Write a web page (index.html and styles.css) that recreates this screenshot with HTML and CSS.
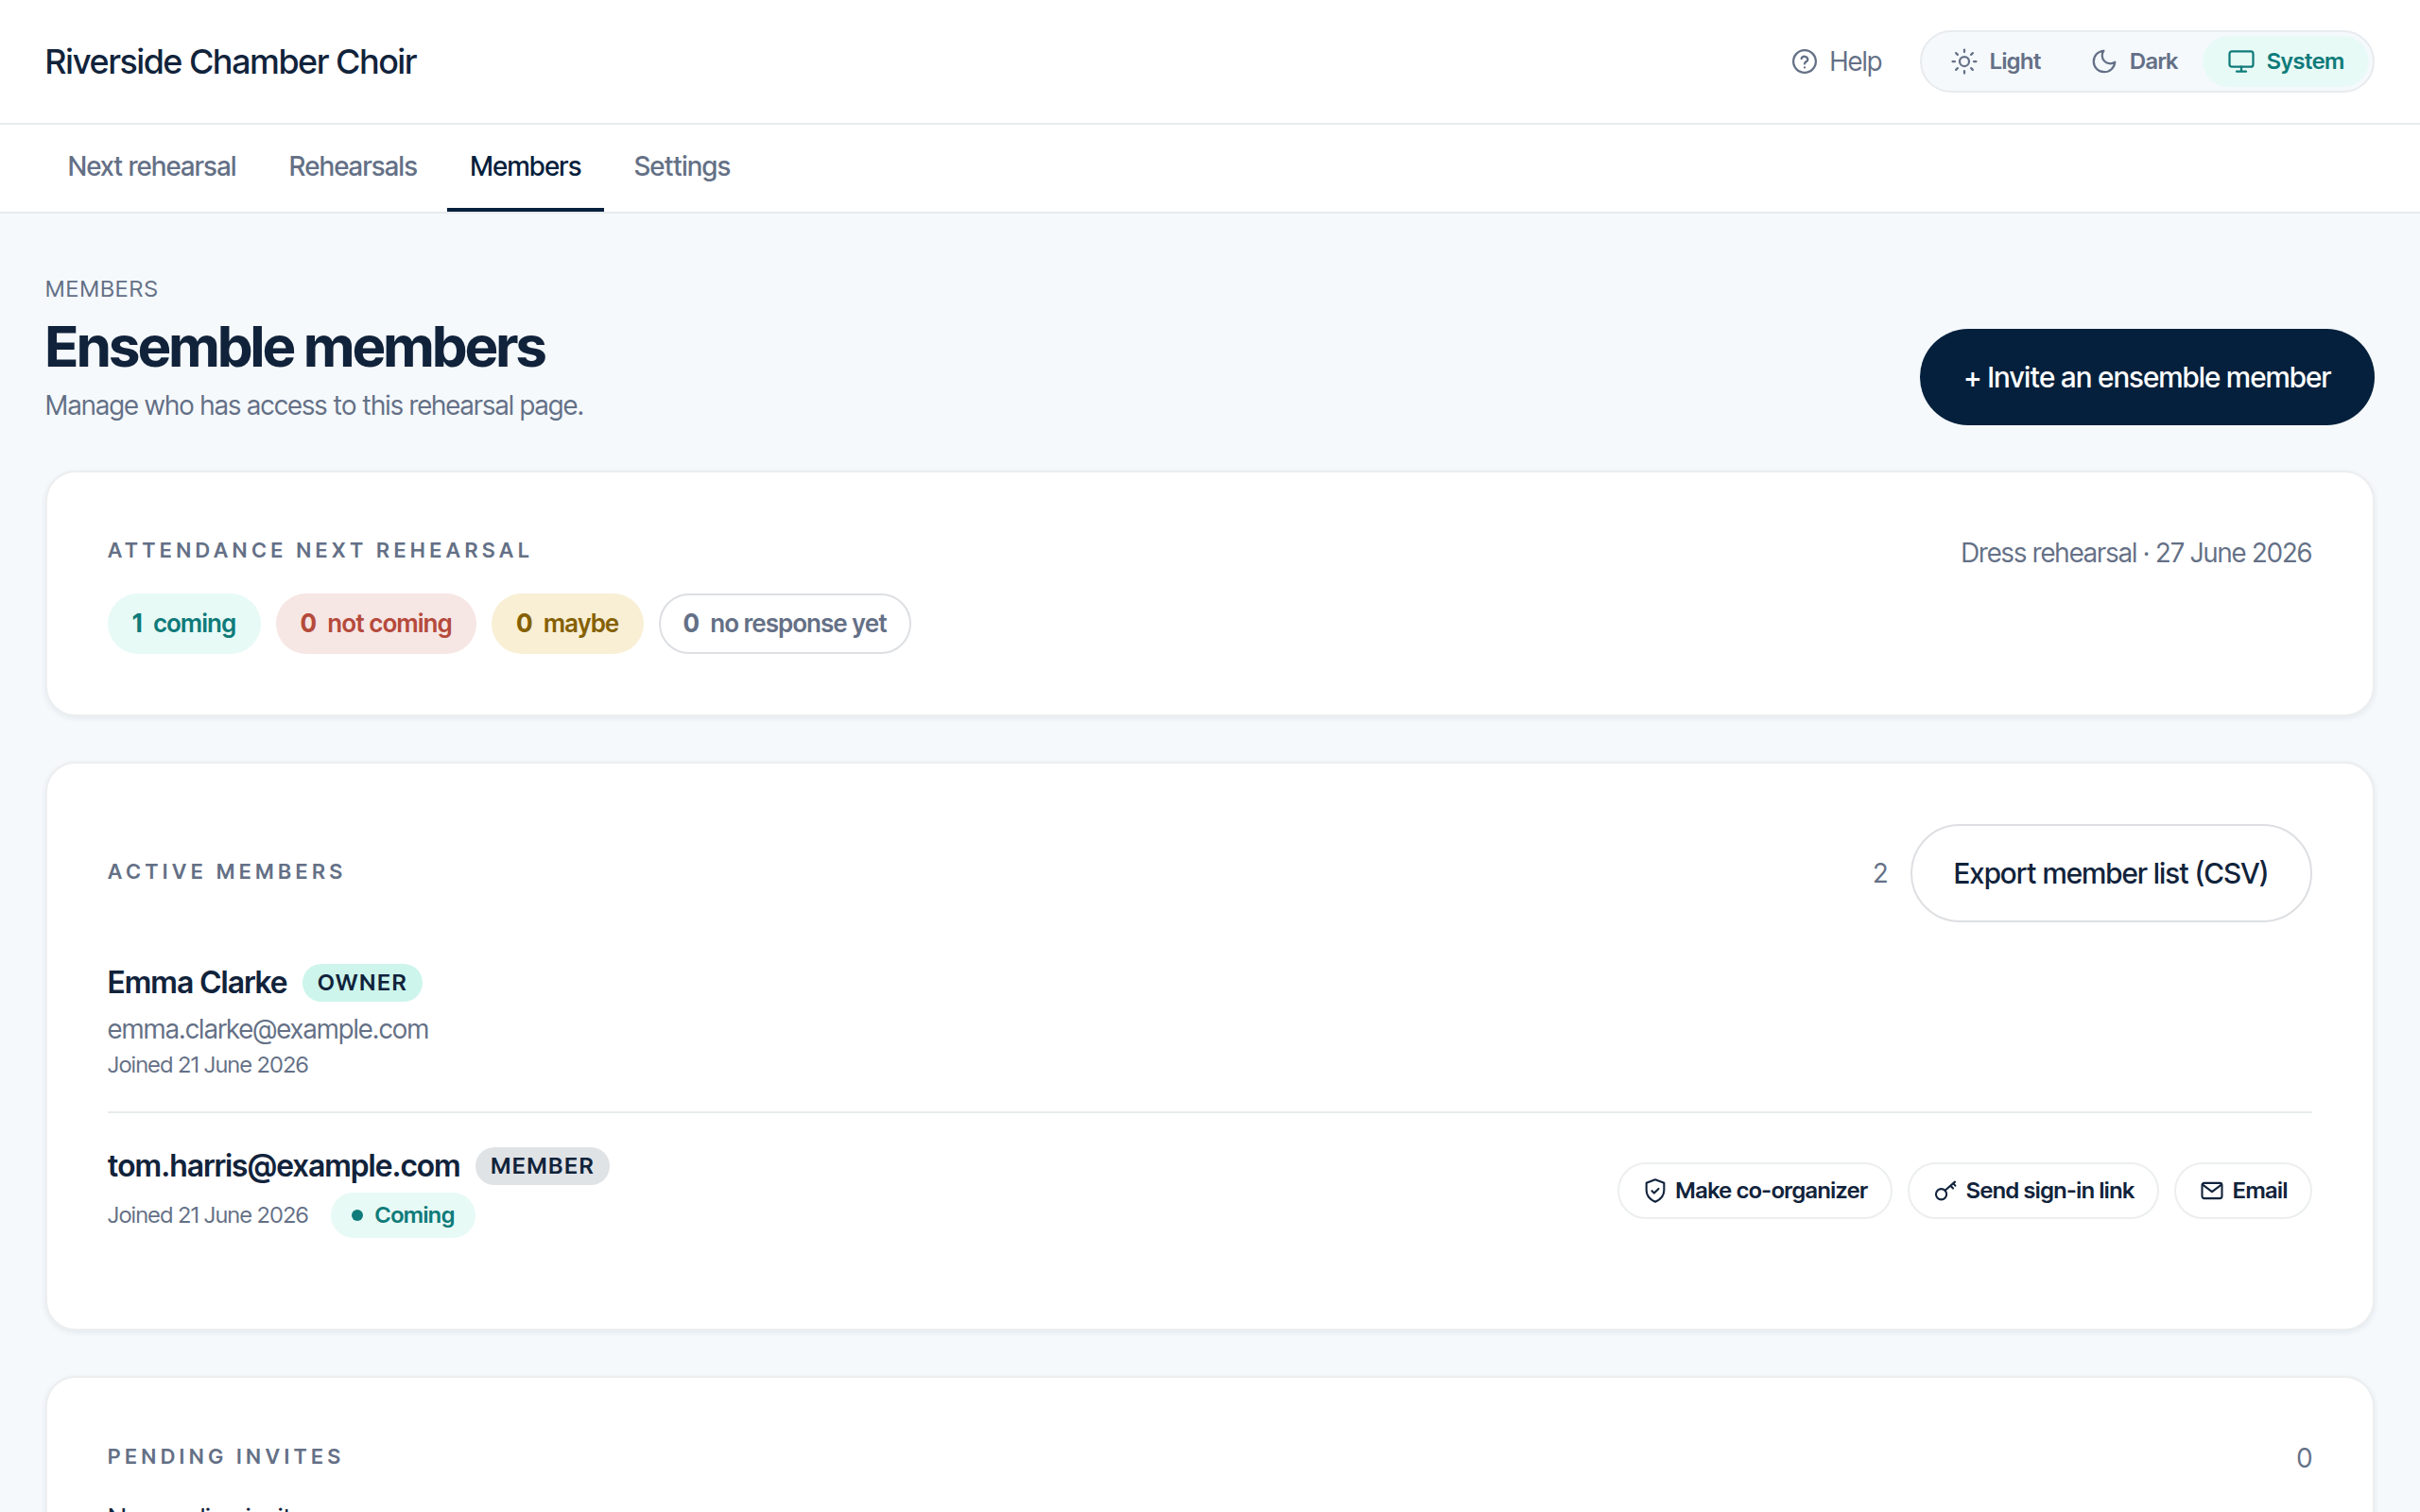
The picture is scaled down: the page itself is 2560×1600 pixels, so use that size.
FILE: index.html
```html
<!DOCTYPE html>
<html lang="en">
<head>
<meta charset="utf-8">
<title>Members · Riverside Chamber Choir</title>
<meta name="viewport" content="width=device-width, initial-scale=1">
<link rel="stylesheet" href="styles.css">
</head>
<body>
<header class="topbar">
  <a class="brand" href="#">Riverside Chamber Choir</a>
  <div class="topbar-tools">
    <a class="help" href="#">
      <svg class="icon icon-lg" viewBox="0 0 24 24" aria-hidden="true"><circle cx="12" cy="12" r="9.5"/><path d="M9.3 9.6a2.8 2.8 0 0 1 5.4.7c0 1.700-2.700 2.100-2.700 3.700M12 17v.1"/></svg>
      Help
    </a>
    <div class="theme" role="group" aria-label="Theme">
      <button class="theme-option" type="button"><svg class="icon icon-lg" viewBox="0 0 24 24" aria-hidden="true"><circle cx="12" cy="12" r="4"/><path d="M12 2v2M12 20v2M4.9 4.9l1.4 1.4M17.7 17.7l1.4 1.4M2 12h2M20 12h2M6.3 17.7l-1.4 1.4M19.1 4.9l-1.4 1.4"/></svg>Light</button>
      <button class="theme-option" type="button"><svg class="icon icon-lg" viewBox="0 0 24 24" aria-hidden="true"><path d="M11.500 3a6.800 6.800 0 0 0 9.500 9.500A9 9 0 1 1 11.500 3z"/></svg>Dark</button>
      <button class="theme-option is-active" type="button" aria-pressed="true"><svg class="icon icon-lg" viewBox="0 0 24 24" aria-hidden="true"><rect x="2" y="3.500" width="20" height="13" rx="2"/><path d="M8 20.500h8M12 16.500v4"/></svg>System</button>
    </div>
  </div>
</header>
<nav class="tabs" aria-label="Main">
  <a class="tab" href="#">Next rehearsal</a>
  <a class="tab" href="#">Rehearsals</a>
  <a class="tab is-active" href="#" aria-current="page">Members</a>
  <a class="tab" href="#">Settings</a>
</nav>
<main class="page">
  <div class="page-head">
    <div>
      <p class="eyebrow">Members</p>
      <h1 class="title">Ensemble members</h1>
      <p class="muted">Manage who has access to this rehearsal page.</p>
    </div>
    <button class="button button-primary" type="button">+ Invite an ensemble member</button>
  </div>

  <section class="card">
    <div class="card-head card-head-top">
      <h2 class="label">Attendance next rehearsal</h2>
      <p class="muted">Dress rehearsal · 27 June 2026</p>
    </div>
    <ul class="chips">
      <li class="chip chip-yes"><strong>1</strong>coming</li>
      <li class="chip chip-no"><strong>0</strong>not coming</li>
      <li class="chip chip-maybe"><strong>0</strong>maybe</li>
      <li class="chip chip-none"><strong>0</strong>no response yet</li>
    </ul>
  </section>

  <section class="card">
    <div class="card-head">
      <h2 class="label">Active members</h2>
      <div class="card-tools">
        <span class="muted">2</span>
        <button class="button button-outline" type="button">Export member list (CSV)</button>
      </div>
    </div>
    <ul class="members">
      <li class="member">
        <div>
          <div class="name-line"><span class="name">Emma Clarke</span><span class="badge badge-owner">Owner</span></div>
          <p class="muted email">emma.clarke@example.com</p>
          <p class="joined">Joined 21 June 2026</p>
        </div>
      </li>
      <li class="member">
        <div>
          <div class="name-line"><span class="name">tom.harris@example.com</span><span class="badge badge-member">Member</span></div>
          <div class="status-line"><span class="joined">Joined 21 June 2026</span><span class="status">Coming</span></div>
        </div>
        <div class="actions">
          <button class="action" type="button"><svg class="icon" viewBox="0 0 24 24" aria-hidden="true"><path d="M12 2l8 3v6.500c0 5-3.500 8.500-8 10.500-4.500-2-8-5.500-8-10.500V5z"/><path d="M9 12.200l2 2 4-4"/></svg>Make co-organizer</button>
          <button class="action" type="button"><svg class="icon" viewBox="0 0 24 24" aria-hidden="true"><circle cx="8.200" cy="15.200" r="4.800"/><path d="M11.600 11.800L20.600 4M16.600 7.500l2.300 2.400M19 5.400l1.900 2"/></svg>Send sign-in link</button>
          <button class="action" type="button"><svg class="icon" viewBox="0 0 24 24" aria-hidden="true"><rect x="3" y="5" width="18" height="14" rx="2"/><path d="M3.500 6.500L12 13l8.500-6.500"/></svg>Email</button>
        </div>
      </li>
    </ul>
  </section>

  <section class="card">
    <div class="card-head">
      <h2 class="label">Pending invites</h2>
      <span class="muted">0</span>
    </div>
    <p class="empty">No pending invites.</p>
  </section>
</main>
</body>
</html>
```
FILE: styles.css
```css
:root {
  --ink: #11233b;
  --navy: #04203c;
  --muted: #647086;
  --teal: #0f7b7a;
  --mint: #e8faf6;
  --line: #e8ebed;
}
* { box-sizing: border-box; }
body {
  margin: 0;
  background: #f5f9fc;
  color: var(--ink);
  font: 400 28px/42px "Inter Tight", Inter, "Liberation Sans", sans-serif;
}
h1, h2, p, ul { margin: 0; padding: 0; }
ul { list-style: none; }
a { color: inherit; text-decoration: none; }
button { font: inherit; color: inherit; cursor: pointer; margin: 0; }
.icon {
  width: 28px;
  height: 28px;
  flex: none;
  fill: none;
  stroke: currentColor;
  stroke-width: 1.8;
  stroke-linecap: round;
  stroke-linejoin: round;
}
.icon-lg { width: 30px; height: 30px; }
.muted { color: var(--muted); }

.topbar {
  display: flex;
  align-items: center;
  justify-content: space-between;
  padding: 32px 48px;
  background: #fff;
  border-bottom: 2px solid var(--line);
}
.brand { font-size: 36px; font-weight: 500; }
.topbar-tools { display: flex; align-items: center; gap: 40px; }
.help { display: flex; align-items: center; gap: 12px; color: var(--muted); }
.theme {
  display: flex;
  padding: 4px;
  background: #f5f9fc;
  border: 2px solid var(--line);
  border-radius: 36px;
}
.theme-option {
  display: flex;
  align-items: center;
  gap: 12px;
  height: 54px;
  padding: 0 26px;
  border: 0;
  border-radius: 27px;
  background: none;
  color: var(--muted);
  font-size: 24px;
  font-weight: 600;
}
.theme-option.is-active { background: var(--mint); color: var(--teal); }

.tabs {
  display: flex;
  gap: 8px;
  padding: 0 48px;
  background: #fff;
  border-bottom: 2px solid var(--line);
}
.tab {
  padding: 23px 24px;
  border-bottom: 4px solid transparent;
  color: var(--muted);
  font-weight: 500;
}
.tab.is-active { color: var(--navy); border-color: var(--navy); }

.page { display: grid; gap: 48px; padding: 64px 48px; }
.page-head { display: flex; align-items: flex-end; justify-content: space-between; }
.eyebrow { color: var(--muted); font-size: 24px; line-height: 32px; letter-spacing: 0.06em; text-transform: uppercase; }
.title { margin-top: 2px; font-size: 60px; line-height: 84px; font-weight: 700; letter-spacing: -0.02em; }

.button { padding: 30px 46px; border: 0; border-radius: 52px; font-size: 30px; font-weight: 500; }
.button-primary { background: var(--navy); color: #fff; }
.button-outline { padding: 29px 44px; background: #fff; border: 2px solid #dddfe2; }

.card {
  padding: 64px;
  background: #fff;
  border: 2px solid #eceeef;
  border-radius: 32px;
  box-shadow: 0 2px 6px rgba(16, 35, 59, 0.08);
}
.card-head { display: flex; align-items: center; justify-content: space-between; }
.card-head-top { align-items: flex-start; }
.card-tools { display: flex; align-items: center; gap: 24px; }
.label { padding-bottom: 4px; color: var(--muted); font-size: 22px; line-height: 36px; font-weight: 600; letter-spacing: 0.22em; text-transform: uppercase; }

.chips { display: flex; gap: 16px; margin-top: 22px; }
.chip {
  display: flex;
  align-items: center;
  gap: 12px;
  height: 64px;
  padding: 0 24px;
  border: 2px solid transparent;
  border-radius: 32px;
  font-size: 26px;
  font-weight: 600;
}
.chip strong { font-weight: 700; }
.chip-yes { background: var(--mint); color: var(--teal); }
.chip-no { background: #f6e6e4; color: #b54a3c; }
.chip-maybe { background: #f8efd5; color: #856000; }
.chip-none { border-color: #dddfe2; color: var(--muted); }

.members { margin-top: 8px; }
.member { display: flex; align-items: center; justify-content: space-between; padding: 32px 0; }
.member + .member { border-top: 2px solid var(--line); }
.name-line { display: flex; align-items: center; gap: 16px; }
.name { font-size: 32px; line-height: 48px; font-weight: 600; }
.badge { height: 40px; padding: 0 16px; border-radius: 20px; font-size: 24px; line-height: 40px; font-weight: 600; letter-spacing: 0.08em; text-transform: uppercase; }
.badge-owner { background: #cdf5ec; }
.badge-member { background: #e0e3e6; }
.email { margin-top: 4px; }
.joined { color: var(--muted); font-size: 24px; line-height: 34px; }
.status-line { display: flex; align-items: center; gap: 24px; margin-top: 4px; }
.status {
  display: flex;
  align-items: center;
  gap: 12px;
  height: 48px;
  padding: 0 22px;
  border-radius: 24px;
  background: var(--mint);
  color: var(--teal);
  font-size: 24px;
  font-weight: 600;
}
.status::before { content: ""; width: 12px; height: 12px; border-radius: 50%; background: currentColor; }
.actions { display: flex; gap: 16px; }
.action {
  display: flex;
  align-items: center;
  gap: 8px;
  height: 60px;
  padding: 0 24px;
  border: 2px solid #eceeef;
  border-radius: 30px;
  background: #fff;
  font-size: 24px;
  font-weight: 600;
}
.empty { margin-top: 22px; }
```
